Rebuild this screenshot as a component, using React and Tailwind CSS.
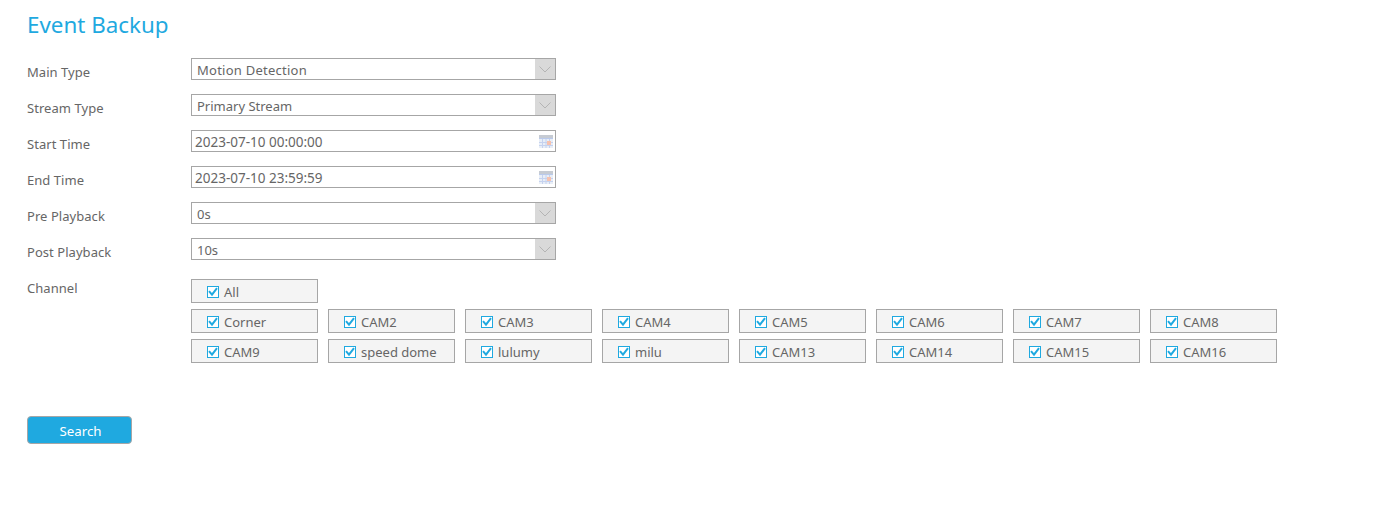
const ff = "font-['Noto_Sans',sans-serif]"

function Row({ label, children }) {
  return (
    <div className="flex h-9">
      <label className="w-[164px] pt-[5px] text-[13px] leading-[18px] tracking-[0.05px] text-[#666]">{label}</label>
      {children}
    </div>
  )
}

function SelectBox({ value, wide }) {
  return (
    <div className="flex h-[22px] w-[365px] border border-[#a6a6a6] bg-white">
      <div className={`flex-1 pl-[5px] pt-px text-[13px] leading-[20px] text-[#666] ${wide ? 'tracking-[0.25px]' : ''}`}>{value}</div>
      <div className="flex w-[20px] items-center justify-center bg-[#d9d9d9]">
        <svg width="12" height="7" viewBox="0 0 12 7" fill="none">
          <path d="M0.5 0.5 L6 6 L11.5 0.5" stroke="#b4b4b4" strokeWidth="1" />
        </svg>
      </div>
    </div>
  )
}

function CalendarIcon() {
  return (
    <svg width="14" height="13" viewBox="0 0 14 13" className="shrink-0 opacity-80">
      <rect x="0" y="0" width="14" height="13" fill="#e3eaf6" />
      <rect x="0" y="0" width="14" height="3" fill="#b9bfc9" />
      <rect x="0" y="3" width="14" height="1" fill="#a9bde8" />
      <path d="M3.5 4v9M7 4v9M10.5 4v9M0 7.5h14M0 10.5h14" stroke="#b7c8ec" strokeWidth="1" />
      <rect x="8" y="6" width="4" height="4" fill="#f4b49c" />
    </svg>
  )
}

function DateBox({ value }) {
  return (
    <div className="flex h-[22px] w-[365px] items-center border border-[#a6a6a6] bg-white pr-[2px]">
      <div className="flex-1 pl-[3px] pt-[2px] text-[13.5px] leading-[20px] text-[#666]">{value}</div>
      <CalendarIcon />
    </div>
  )
}

function Check({ name }) {
  return (
    <div className="flex h-6 w-[127px] items-center border border-[#a6a6a6] bg-[#f4f4f4] pl-[15px]">
      <span className="mr-[5px] mt-px flex h-3 w-3 shrink-0 items-center justify-center border border-[#1fa9e0] bg-white">
        <svg width="10" height="10" viewBox="0 0 10 10">
          <path d="M1 4.2 L4 7.6 L9 1.2" fill="none" stroke="#1fa9e0" strokeWidth="2" />
        </svg>
      </span>
      <span className="pt-[2px] text-[13px] leading-[20px] text-[#666]">{name}</span>
    </div>
  )
}

const channels = [
  'Corner', 'CAM2', 'CAM3', 'CAM4', 'CAM5', 'CAM6', 'CAM7', 'CAM8',
  'CAM9', 'speed dome', 'lulumy', 'milu', 'CAM13', 'CAM14', 'CAM15', 'CAM16',
]

export default function App() {
  return (
    <div className={`h-[517px] w-[1381px] overflow-hidden bg-white pl-[27px] pt-[8px] ${ff}`}>
      <h1 className="mb-[17px] h-[33px] text-[22.4px] leading-[33px] font-normal text-[#1fa9e0]">Event Backup</h1>

      <Row label="Main Type"><SelectBox value="Motion Detection" wide /></Row>
      <Row label="Stream Type"><SelectBox value="Primary Stream" /></Row>
      <Row label="Start Time"><DateBox value="2023-07-10 00:00:00" /></Row>
      <Row label="End Time"><DateBox value="2023-07-10 23:59:59" /></Row>
      <Row label="Pre Playback"><SelectBox value="0s" /></Row>
      <Row label="Post Playback"><SelectBox value="10s" /></Row>

      <div className="mt-[5px] flex">
        <label className="w-[164px] text-[13px] leading-[18px] tracking-[0.05px] text-[#666]">Channel</label>
        <div className="flex flex-col gap-[6px]">
          <Check name="All" />
          <div className="grid grid-cols-[repeat(8,127px)] gap-x-[10px] gap-y-[6px]">
            {channels.map(c => <Check key={c} name={c} />)}
          </div>
        </div>
      </div>

      <button className="mt-[53px] block h-7 w-[105px] rounded-[4px] border border-[#a6a6a6] bg-[#1fa9e0] pl-[2px] pt-[3px] text-[13.3px] text-white">
        Search
      </button>
    </div>
  )
}
